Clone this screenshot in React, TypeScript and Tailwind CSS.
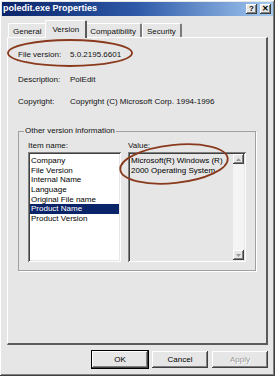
import React from 'react';

const raised =
  'shadow-[inset_-1px_-1px_#404040,inset_1px_1px_#ffffff,inset_-2px_-2px_#808080,inset_2px_2px_#e6e6e6]';
const sunken =
  'shadow-[inset_1px_1px_#808080,inset_-1px_-1px_#ffffff,inset_2px_2px_#404040,inset_-2px_-2px_#e6e6e6]';

function CaptionButton({ children }: { children: React.ReactNode }) {
  return (
    <div
      className={`w-[11px] h-[10px] bg-[#e6e6e6] ${raised} flex items-center justify-center text-[8px] font-bold leading-none text-black`}
    >
      {children}
    </div>
  );
}

function Tab({ label, active }: { label: string; active?: boolean }) {
  if (active) {
    return (
      <div className="relative z-10 -mb-px -mx-[2px] h-[18px] px-[6px] pt-[4px] bg-[#e6e6e6] border-t border-l border-white border-r-2 border-r-[#5a5a5a] rounded-t-[2px] leading-[9px]">
        {label}
      </div>
    );
  }
  return (
    <div className="h-[14px] px-[4px] pt-[3px] bg-[#e6e6e6] border-t border-l border-white border-r-2 border-r-[#7a7a7a] rounded-t-[2px] leading-[10px]">
      {label}
    </div>
  );
}

function Field({ label, value }: { label: string; value: string }) {
  return (
    <div className="flex h-[10px] items-center">
      <span className="w-[52px] shrink-0">{label}</span>
      <span className="whitespace-nowrap">{value}</span>
    </div>
  );
}

function Button({ label, isDefault, disabled }: { label: string; isDefault?: boolean; disabled?: boolean }) {
  return (
    <div
      className={`w-[56px] h-[17px] flex items-center justify-center bg-[#e6e6e6] ${raised} ${
        isDefault ? 'outline outline-1 outline-black' : ''
      } ${disabled ? 'text-[#9a9a9a] [text-shadow:1px_1px_#ffffff]' : 'text-black'}`}
    >
      {label}
    </div>
  );
}

const items = [
  'Company',
  'File Version',
  'Internal Name',
  'Language',
  'Original File name',
  'Product Name',
  'Product Version',
];

export default function App() {
  return (
    <div
      className={`relative w-[275px] h-[376px] bg-[#e6e6e6] p-[2px] flex flex-col font-['Liberation_Sans',Arial,sans-serif] text-[8px] text-[#111] ${raised}`}
    >
      {/* Title bar */}
      <div className="h-[14px] flex items-center justify-between pl-[1px] pr-[2px] bg-gradient-to-r from-[#0a246a] via-[#2f5aa8] to-[#a6caf0]">
        <span className="text-white font-bold text-[9px]">poledit.exe Properties</span>
        <div className="flex gap-[3px]">
          <CaptionButton>?</CaptionButton>
          <CaptionButton>✕</CaptionButton>
        </div>
      </div>

      {/* Tabs */}
      <div className="flex items-end h-[21px] pl-[6px]">
        <Tab label="General" />
        <Tab label="Version" active />
        <Tab label="Compatibility" />
        <Tab label="Security" />
      </div>

      {/* Panel */}
      <div className="ml-[5px] w-[261px] h-[308px] border-t border-l border-white border-r-2 border-b-2 border-r-[#5a5a5a] border-b-[#5a5a5a] pl-[10px] pt-[12px]">
        <div className="flex flex-col">
          <Field label="File version:" value="5.0.2195.6601" />
          <div className="h-[15px]" />
          <Field label="Description:" value="PolEdit" />
          <div className="h-[12px]" />
          <Field label="Copyright:" value="Copyright (C) Microsoft Corp. 1994-1996" />
        </div>

        {/* Group box */}
        <div className="relative mt-[24px] w-[238px] h-[140px] border border-[#a0a0a0] shadow-[1px_1px_#ffffff] pl-[9px] pt-[9px]">
          <span className="absolute -top-[6px] left-[5px] bg-[#e6e6e6] px-[1px] leading-[10px]">
            Other version information
          </span>
          <div className="flex gap-[7px]">
            <div className="flex flex-col">
              <span className="h-[10px] leading-[10px]">Item name:</span>
              <div className={`mt-[1px] w-[93px] h-[110px] bg-white ${sunken} p-[2px] pt-[4px]`}>
                {items.map((it) => (
                  <div
                    key={it}
                    className={`h-[9.7px] leading-[9.7px] pl-[1px] text-[8px] whitespace-nowrap ${
                      it === 'Product Name' ? 'bg-[#0a246a] text-white' : 'text-black'
                    }`}
                  >
                    {it}
                  </div>
                ))}
              </div>
            </div>
            <div className="flex flex-col">
              <span className="h-[10px] leading-[10px]">Value:</span>
              <div className={`mt-[1px] w-[118px] h-[110px] bg-[#e6e6e6] ${sunken} p-[2px] flex`}>
                <div className="flex-1 pl-[1px] pt-[2px] text-[8px] leading-[9.7px] text-black whitespace-nowrap">
                  <div>Microsoft(R) Windows (R)</div>
                  <div>2000 Operating System</div>
                </div>
                <div className="w-[11px] flex flex-col bg-[#f4f4f4]">
                  <div className={`h-[10px] flex items-center justify-center ${raised} bg-[#e6e6e6]`}>
                    <svg width="5" height="3" viewBox="0 0 5 3">
                      <path d="M2.5 0 L5 3 L0 3 Z" fill="#9a9a9a" />
                    </svg>
                  </div>
                  <div className="flex-1" />
                  <div className={`h-[10px] flex items-center justify-center ${raised} bg-[#e6e6e6]`}>
                    <svg width="5" height="3" viewBox="0 0 5 3">
                      <path d="M0 0 L5 0 L2.5 3 Z" fill="#9a9a9a" />
                    </svg>
                  </div>
                </div>
              </div>
            </div>
          </div>
        </div>
      </div>

      {/* Buttons */}
      <div className="flex justify-end gap-[4px] pr-[5px] mt-[6px]">
        <Button label="OK" isDefault />
        <Button label="Cancel" />
        <Button label="Apply" disabled />
      </div>

      {/* Hand-drawn annotation ovals */}
      <svg className="absolute inset-0 pointer-events-none" width="275" height="376">
        <ellipse cx="70" cy="53" rx="62" ry="13" fill="none" stroke="#8a3a1c" strokeWidth="1.8" />
        <ellipse
          cx="174"
          cy="164"
          rx="54"
          ry="19"
          fill="none"
          stroke="#8a3a1c"
          strokeWidth="1.8"
          transform="rotate(-6 174 164)"
        />
      </svg>
    </div>
  );
}
